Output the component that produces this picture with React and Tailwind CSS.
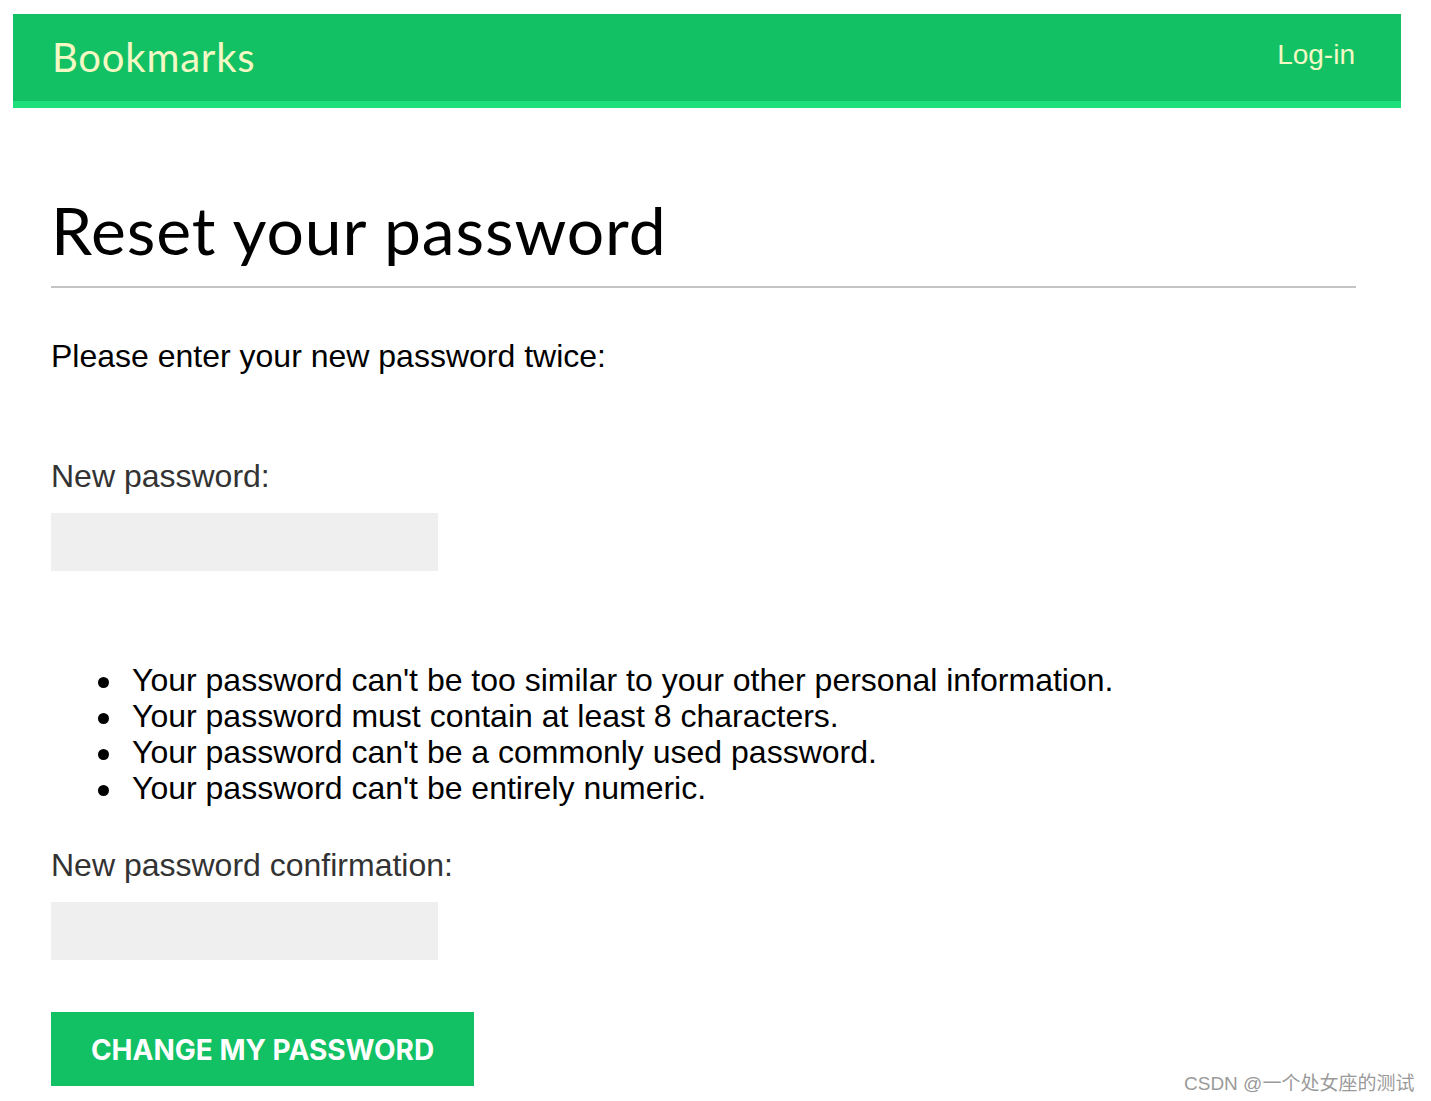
const rules = [
  "Your password can't be too similar to your other personal information.",
  "Your password must contain at least 8 characters.",
  "Your password can't be a commonly used password.",
  "Your password can't be entirely numeric.",
];

export default function App() {
  return (
    <div className="min-h-[1101px] bg-white relative">
      <div className="pt-[14px] pl-[13px]">
        <header className="w-[1388px] h-[94px] bg-[#12c164] border-b-[7px] border-[#1de07b] flex items-center justify-between pl-[39px] pr-[46px]">
          <span className="text-[40px] tracking-[0.8px] text-[#f3f8c4] leading-none pb-[2px]" style={{ fontFamily: "Lato, 'Noto Sans', sans-serif" }}>Bookmarks</span>
          <span className="text-[28px] text-[#f3f8c4] leading-none pb-[6px]" style={{ fontFamily: "'Liberation Sans', Arial, sans-serif" }}>Log-in</span>
        </header>
      </div>
      <main className="pl-[51px] w-[1356px]" style={{ fontFamily: "'Liberation Sans', Arial, sans-serif" }}>
        <h1 className="mt-[84px] text-[66px] tracking-[0.9px] leading-[76px] text-black" style={{ fontFamily: "Lato, 'Noto Sans', sans-serif" }}>Reset your password</h1>
        <div className="mt-[18px] h-[2px] bg-[#c4c4c4]"></div>
        <p className="mt-[50px] text-[32px] leading-[36px] text-black">Please enter your new password twice:</p>
        <label className="block mt-[84px] text-[32px] leading-[36px] text-[#333]">New password:</label>
        <div className="mt-[19px] w-[387px] h-[58px] bg-[#efefef]"></div>
        <ul className="mt-[91px] pl-[47px] text-[32px] leading-[36px] text-black">
          {rules.map((r) => (
            <li key={r} className="flex items-center">
              <span className="w-[11px] h-[11px] rounded-full bg-black mt-[4px] mr-[23px] shrink-0"></span>
              <span>{r}</span>
            </li>
          ))}
        </ul>
        <label className="block mt-[41px] text-[32px] leading-[36px] text-[#333]">New password confirmation:</label>
        <div className="mt-[19px] w-[387px] h-[58px] bg-[#efefef]"></div>
        <button className="mt-[52px] w-[423px] h-[74px] bg-[#12c164] text-white text-[28px] font-bold uppercase pt-[2px]" style={{ fontFamily: "Inter, Roboto, sans-serif" }}>Change my password</button>
      </main>
      <div className="absolute left-[1184px] top-[1070px] text-[19px] text-[#9a9a9a]" style={{ fontFamily: "'Liberation Sans', 'Noto Sans CJK SC', sans-serif" }}>CSDN @一个处女座的测试</div>
    </div>
  );
}
